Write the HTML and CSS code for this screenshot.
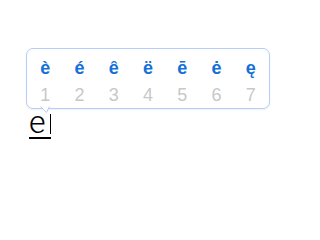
FILE: index.html
```html
<!DOCTYPE html>
<html>
<head>
<meta charset="utf-8">
<link rel="stylesheet" href="styles.css">
</head>
<body>
<div class="popup">
  <div class="grid">
    <span class="ch">è</span><span class="ch">é</span><span class="ch">ê</span><span class="ch">ë</span><span class="ch">ē</span><span class="ch">ė</span><span class="ch">ę</span>
    <span class="num">1</span><span class="num">2</span><span class="num">3</span><span class="num">4</span><span class="num">5</span><span class="num">6</span><span class="num">7</span>
  </div>
  <svg class="arrow" width="12" height="9" viewBox="0 0 12 9">
    <polygon points="0.5,0 6.5,6.5 9.5,0" fill="#fff"/>
    <polyline points="0.5,0.5 6.5,6.5 9.5,0.5" fill="none" stroke="#b3cefa" stroke-width="1"/>
  </svg>
</div>
<div class="input">
  <span class="composed"><span class="letter">e</span><span class="cursor"></span></span>
</div>
</body>
</html>
```
FILE: styles.css
```css
html, body {
  margin: 0;
  padding: 0;
  background: #fff;
  font-family: "Liberation Sans", Arial, sans-serif;
}
.popup {
  position: relative;
  margin: 48px 0 0 26px;
  width: 244px;
  box-sizing: border-box;
  border: 1px solid #b3cefa;
  border-radius: 7px;
  background: #fff;
  padding: 8px 1px 3px 1px;
  box-shadow: 0 1px 2px rgba(0,0,0,0.06);
}
.grid {
  display: grid;
  grid-template-columns: repeat(7, 1fr);
  row-gap: 6px;
  text-align: center;
}
.ch {
  font-size: 18px;
  line-height: 22px;
  color: #1570d8;
  font-weight: bold;
}
.num {
  font-size: 18px;
  line-height: 20px;
  color: #c8c8c8;
}
.arrow {
  position: absolute;
  left: 13px;
  bottom: -7px;
  display: block;
}
.input {
  margin: 0 0 0 29px;
}
.composed {
  display: inline-flex;
  align-items: flex-end;
  border-bottom: 2px solid #000;
  padding-bottom: 2px;
  width: 22px;
}
.letter {
  font-family: Roboto, "Liberation Sans", sans-serif;
  font-weight: 300;
  font-size: 32px;
  line-height: 26px;
  color: #000;
}
.cursor {
  flex: none;
  width: 1px;
  height: 20px;
  background: #000;
  margin: 0 0 1px 4px;
}
```
